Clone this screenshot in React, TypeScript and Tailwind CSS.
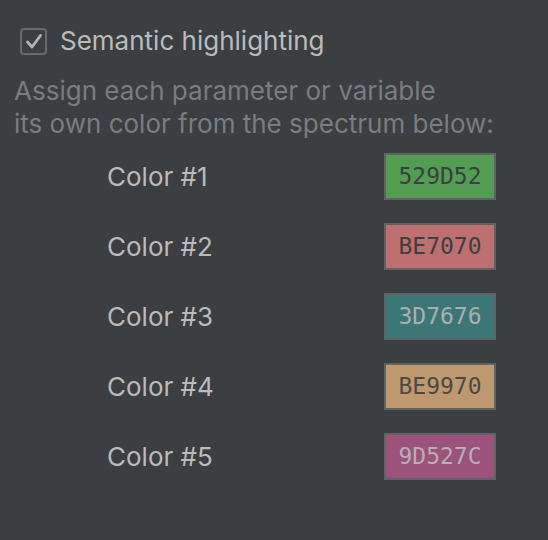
import React from "react";

const colors = [
  { label: "Color #1", hex: "529D52", text: "text-[#3b3f42]" },
  { label: "Color #2", hex: "BE7070", text: "text-[#3b3f42]" },
  { label: "Color #3", hex: "3D7676", text: "text-[#a9b0b0]" },
  { label: "Color #4", hex: "BE9970", text: "text-[#4a4a4a]" },
  { label: "Color #5", hex: "9D527C", text: "text-[#b4b0b4]" },
];

export default function App() {
  return (
    <div className="w-[548px] h-[540px] bg-[#3b3f42] overflow-hidden" style={{ fontFamily: "Inter, 'Liberation Sans', sans-serif" }}>
      <div className="pt-[27px] pl-[20px] flex items-center gap-[13px]">
        <div className="w-[27px] h-[27px] rounded-[4px] border-2 border-[#676b6f] flex items-center justify-center">
          <svg width="18" height="17" viewBox="0 0 18 17" fill="none">
            <path d="M2.5 9 L7 14 L15.5 2.5" stroke="#b3b3b3" strokeWidth="2.8" strokeLinecap="round" strokeLinejoin="round" />
          </svg>
        </div>
        <span className="text-[26px] leading-[28px] text-[#bbbbbb]">Semantic highlighting</span>
      </div>
      <div className="pl-[14px] mt-[19px] text-[26px] leading-[33px] text-[#7a7c7e]">
        <div>Assign each parameter or variable</div>
        <div>its own color from the spectrum below:</div>
      </div>
      <div className="mt-[13px] flex flex-col gap-[23px]">
        {colors.map((c) => (
          <div key={c.hex} className="flex items-center h-[47px]">
            <span className="pl-[107px] w-[384px] text-[26px] text-[#bbbbbb]">{c.label}</span>
            <div
              className={`w-[112px] h-[47px] border-2 border-[#5f6366] flex items-center justify-center text-[23px] ${c.text}`}
              style={{ backgroundColor: `#${c.hex}`, fontFamily: "'DejaVu Sans Mono', monospace" }}
            >
              {c.hex}
            </div>
          </div>
        ))}
      </div>
    </div>
  );
}
